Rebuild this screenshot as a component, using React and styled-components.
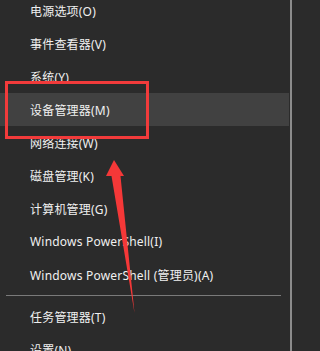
import React from "react";
import styled, { createGlobalStyle } from "styled-components";

const Global = createGlobalStyle`
  html, body {
    margin: 0;
    padding: 0;
    background: #2b2b2b;
    overflow: hidden;
  }
`;

const Screen = styled.div`
  position: relative;
  width: 294px;
  height: 351px;
  overflow: hidden;
  background: #2b2b2b;
  font-family: "Noto Sans", "Noto Sans CJK SC", sans-serif;
  font-size: 12px;
  letter-spacing: 0.2px;
  color: #f0f0f0;
`;

const Menu = styled.div`
  display: flex;
  flex-direction: column;
  width: 290px;
  height: 380px;
  margin-top: -6px;
  border-right: 2px solid #8c8c8c;
  background: #2b2b2b;
`;

const Item = styled.div`
  display: flex;
  align-items: center;
  height: 33px;
  flex-shrink: 0;
  padding-left: 30px;
  margin-right: 1px;
  background: ${(p) => (p.$active ? "#414141" : "transparent")};
  white-space: nowrap;
`;

const Separator = styled.div`
  display: flex;
  align-items: center;
  height: 9px;
  flex-shrink: 0;
  padding: 0 9px 0 6px;
  &::after {
    content: "";
    flex: 1;
    height: 1px;
    background: #7a7a7a;
  }
`;

const HighlightBox = styled.div`
  position: absolute;
  left: 5px;
  top: 81px;
  width: 138px;
  height: 52px;
  border: 3px solid #f23b3b;
`;

const Arrow = styled.svg`
  position: absolute;
  left: 0;
  top: 0;
`;

const items = [
  "电源选项(O)",
  "事件查看器(V)",
  "系统(Y)",
  "设备管理器(M)",
  "网络连接(W)",
  "磁盘管理(K)",
  "计算机管理(G)",
  "Windows PowerShell(I)",
  "Windows PowerShell (管理员)(A)",
];

const lower = ["任务管理器(T)", "设置(N)"];

export default function App() {
  return (
    <>
      <Global />
      <Screen>
        <Menu>
          {items.map((t, i) => (
            <Item key={t} $active={i === 3}>
              {t}
            </Item>
          ))}
          <Separator />
          {lower.map((t) => (
            <Item key={t}>{t}</Item>
          ))}
        </Menu>
        <HighlightBox />
        <Arrow width="294" height="351" viewBox="0 0 294 351">
          <path
            d="M114 160 L124 176 L120.5 176 L134.5 313 L111.5 176 L106 176 Z"
            fill="#f53838"
          />
        </Arrow>
      </Screen>
    </>
  );
}
